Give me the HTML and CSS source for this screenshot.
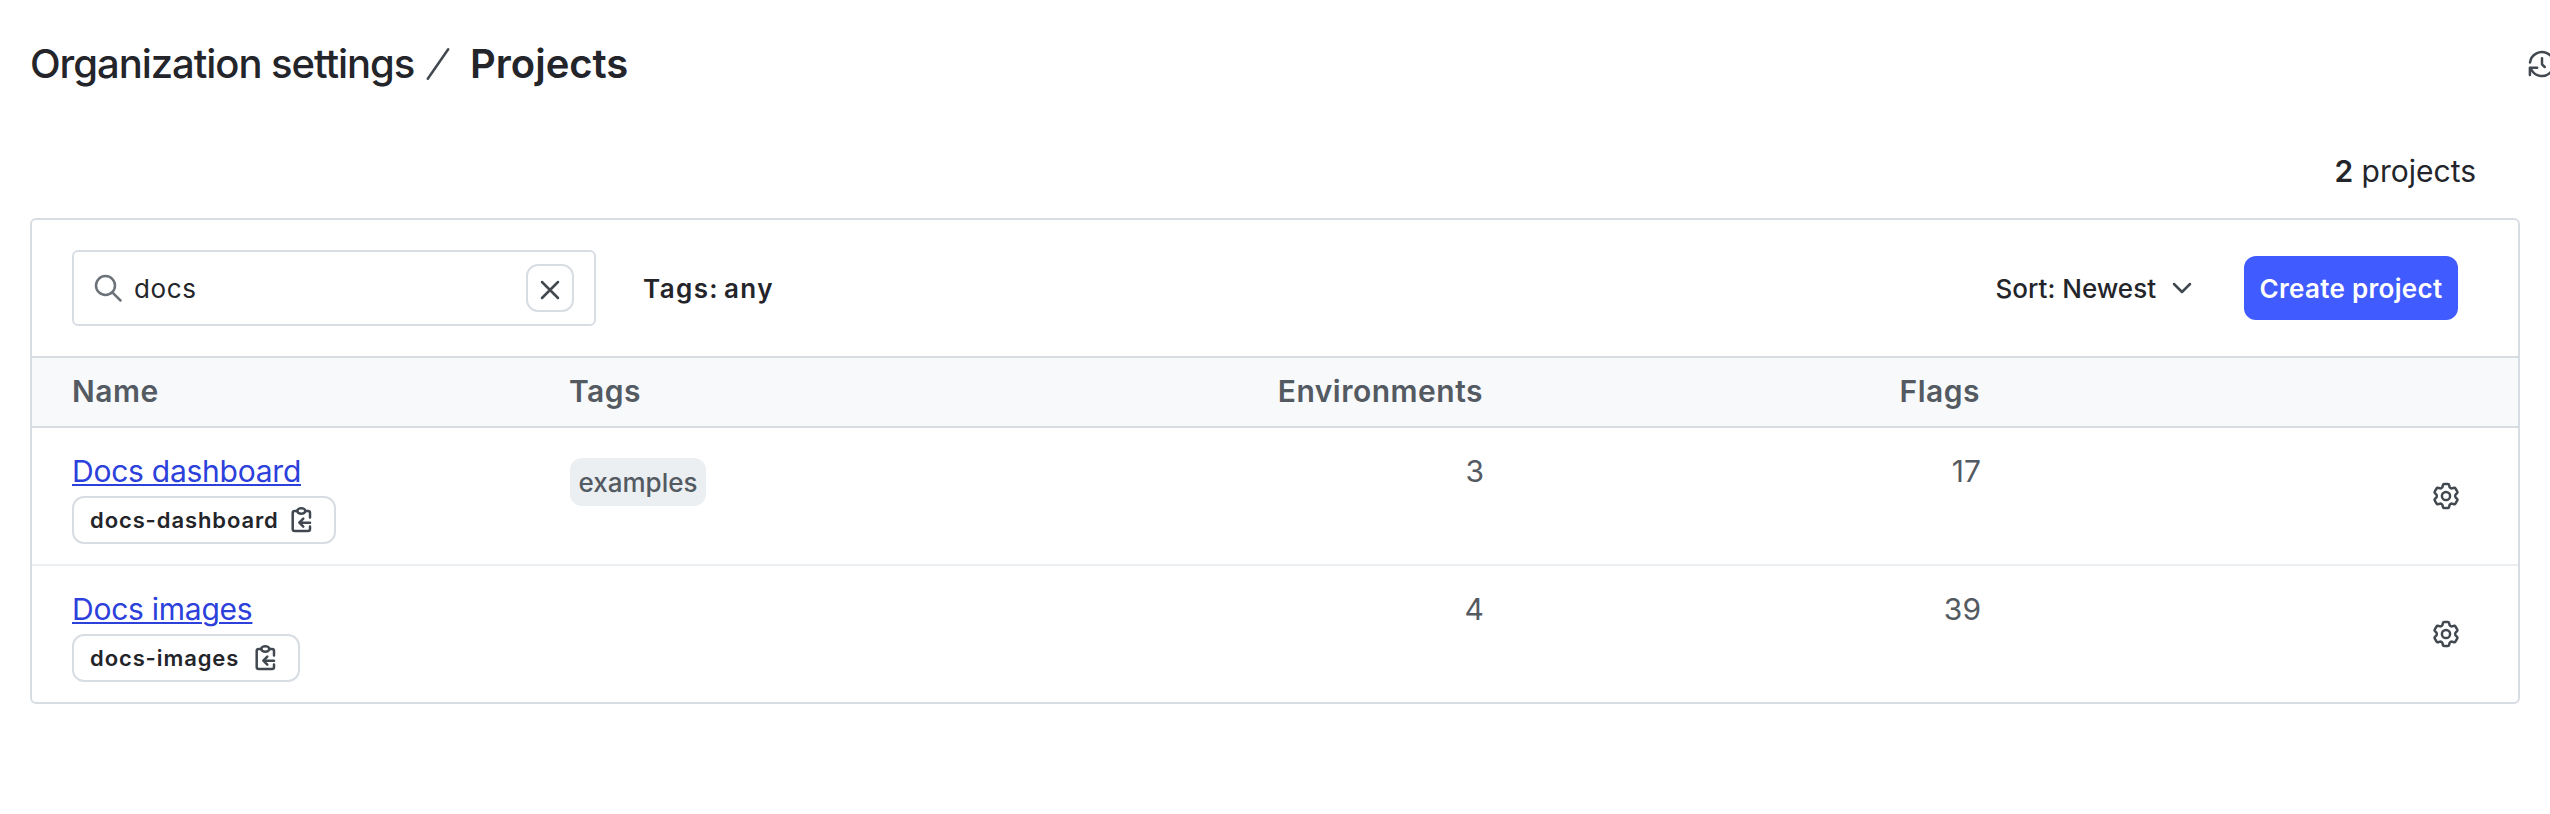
FILE: index.html
```html
<!DOCTYPE html>
<html lang="en">
<head>
    <meta charset="UTF-8">
    <meta name="viewport" content="width=device-width, initial-scale=1.0">
    <title>Projects</title>
    <link rel="stylesheet" href="styles.css">
</head>
<body>
    <!-- Shared icons -->
    <svg class="icon-defs" xmlns="http://www.w3.org/2000/svg">
        <symbol id="icon-gear" viewBox="-16 -16 32 32">
            <path d="M-3.6 -8.9L-3.1 -11Q-2.9 -12 -1.9 -12H1.9Q2.9 -12 3.1 -11L3.6 -8.9Q4.4 -7.6 5.9 -7.6L8 -8.2Q8.9 -8.5 9.4 -7.6L11.3 -4.3Q11.8 -3.5 11.1 -2.8L9.5 -1.3Q8.8 0 9.5 1.3L11.1 2.8Q11.8 3.5 11.3 4.3L9.4 7.6Q8.9 8.5 8 8.2L5.9 7.6Q4.4 7.6 3.6 8.9L3.1 11Q2.9 12 1.9 12H-1.9Q-2.9 12 -3.1 11L-3.6 8.9Q-4.4 7.6 -5.9 7.6L-8 8.2Q-8.9 8.5 -9.4 7.6L-11.3 4.3Q-11.8 3.5 -11.1 2.8L-9.5 1.3Q-8.8 0 -9.5 -1.3L-11.1 -2.8Q-11.8 -3.5 -11.3 -4.3L-9.4 -7.6Q-8.9 -8.5 -8 -8.2L-5.9 -7.6Q-4.4 -7.6 -3.6 -8.9Z"/>
            <circle cx="0" cy="0" r="4.1"/>
        </symbol>
        <symbol id="icon-copy" viewBox="0 0 24 28">
            <path d="M8 5H5.7Q3.7 5 3.7 7V23Q3.7 25 5.7 25H19Q21 25 21 23V20.5M16.5 5H19Q21 5 21 7V11.5"/>
            <ellipse cx="12.3" cy="5" rx="4" ry="2.7"/>
            <path d="M21 16.7H10.5M14.3 12.7L10.3 16.7L14.3 20.7"/>
        </symbol>
    </svg>

    <header class="page-header">
        <h1 class="breadcrumb">
            <span class="breadcrumb-parent">Organization settings</span>
            <svg class="breadcrumb-slash" viewBox="0 0 24 34"><path d="M22.2 2.2L1.8 31.8"/></svg>
            <span class="breadcrumb-current">Projects</span>
        </h1>
        <svg class="history-icon" viewBox="0 0 32 32">
            <path d="M4 14.5A12 12 0 1 1 5.6 22.2L4.2 20"/>
            <path d="M3.9 27V19.8H11.2M16 10.3V16.3L18.7 19"/>
        </svg>
    </header>

    <p class="project-count"><strong>2</strong> projects</p>

    <main class="card">
        <div class="toolbar">
            <div class="search">
                <svg class="search-icon" viewBox="0 0 28 28"><circle cx="11.5" cy="11.5" r="9.5"/><path d="M18.3 18.3L26.5 26.5"/></svg>
                <span class="search-text">docs</span>
                <button class="clear-button" aria-label="Clear">
                    <svg class="clear-icon" viewBox="0 0 20 20"><path d="M2 2L18 18M18 2L2 18"/></svg>
                </button>
            </div>
            <button class="filter-button">Tags: any</button>
            <button class="sort-button">
                Sort: Newest
                <svg class="chevron-icon" viewBox="0 0 20 12"><path d="M2 2L10 10L18 2"/></svg>
            </button>
            <button class="create-button">Create project</button>
        </div>

        <div class="row row-head">
            <div>Name</div>
            <div>Tags</div>
            <div class="number">Environments</div>
            <div class="number">Flags</div>
            <div></div>
        </div>
        <div class="row">
            <div class="name-cell">
                <a class="project-link" href="#">Docs dashboard</a>
                <span class="key-badge key-dashboard">docs-dashboard <svg class="copy-icon"><use href="#icon-copy"/></svg></span>
            </div>
            <div class="tag-cell"><span class="tag">examples</span></div>
            <div class="number">3</div>
            <div class="number">17</div>
            <div class="action"><svg class="gear-icon"><use href="#icon-gear"/></svg></div>
        </div>
        <div class="row">
            <div class="name-cell">
                <a class="project-link" href="#">Docs images</a>
                <span class="key-badge key-images">docs-images <svg class="copy-icon"><use href="#icon-copy"/></svg></span>
            </div>
            <div></div>
            <div class="number">4</div>
            <div class="number">39</div>
            <div class="action"><svg class="gear-icon"><use href="#icon-gear"/></svg></div>
        </div>
    </main>
</body>
</html>
```

FILE: styles.css
```css
* {
    box-sizing: border-box;
}

body {
    margin: 0;
    padding: 40px 30px 0;
    overflow: hidden;
    background-color: #fff;
    color: #23252a;
    font-family: Inter, "Liberation Sans", sans-serif;
    font-size: 30px;
}

button {
    padding: 0;
    border: none;
    background: none;
    color: inherit;
    font-family: inherit;
    font-size: 26px;
    cursor: pointer;
}

svg {
    flex: none;
    fill: none;
    stroke: #414850;
    stroke-width: 2.5;
    stroke-linecap: round;
    stroke-linejoin: round;
}

.icon-defs {
    display: none;
}

/* Page heading */
.page-header {
    display: flex;
    justify-content: space-between;
    align-items: center;
    height: 48px;
    margin-right: -38px;
}

.breadcrumb {
    display: flex;
    align-items: center;
    margin: 0;
    font-size: 40px;
    line-height: 48px;
    font-weight: 500;
    white-space: nowrap;
}

.breadcrumb-parent {
    width: 396px;
    letter-spacing: -1.05px;
}

.breadcrumb-slash {
    width: 24px;
    height: 34px;
}

.breadcrumb-current {
    margin-left: 20px;
    font-weight: 600;
}

.history-icon {
    width: 32px;
    height: 32px;
}

.project-count {
    margin: 65px 44px 0 0;
    height: 65px;
    line-height: 36px;
    text-align: right;
}

.project-count strong {
    font-weight: 600;
}

/* Projects table */
.card {
    border: 2px solid #d8dde3;
    border-radius: 6px;
}

.toolbar {
    display: flex;
    align-items: center;
    height: 136px;
    padding: 0 60px 0 40px;
}

.search {
    display: flex;
    align-items: center;
    width: 524px;
    height: 76px;
    padding: 0 20px;
    border: 2px solid #d8dde3;
    border-radius: 6px;
    font-size: 26px;
}

.search-icon {
    width: 28px;
    height: 28px;
    stroke: #6c727a;
}

.search-text {
    margin-left: 12px;
    letter-spacing: 0.6px;
}

.clear-button {
    display: flex;
    align-items: center;
    justify-content: center;
    width: 48px;
    height: 48px;
    margin-left: auto;
    padding-top: 4px;
    border: 2px solid #d8dde3;
    border-radius: 12px;
}

.clear-icon {
    width: 20px;
    height: 20px;
}

.filter-button {
    margin-left: 47px;
    font-weight: 600;
    letter-spacing: 1.4px;
    word-spacing: -3px;
}

.sort-button {
    display: flex;
    align-items: center;
    gap: 16px;
    margin-left: auto;
    font-weight: 500;
}

.chevron-icon {
    width: 20px;
    height: 12px;
}

.create-button {
    width: 214px;
    height: 64px;
    margin-left: 52px;
    border-radius: 12px;
    background-color: #405bff;
    color: #fff;
    font-weight: 600;
    letter-spacing: 0.3px;
}

.row {
    display: grid;
    grid-template-columns: 498px 498px 416px 497px 1fr;
    height: 138px;
    padding: 25px 56px 0 40px;
    border-bottom: 2px solid #ebeff2;
    color: #545a62;
    line-height: 36px;
}

.row:last-child {
    height: 136px;
    border-bottom: none;
}

.row-head {
    grid-template-columns: 497px 498px 416px 497px 1fr;
    height: 72px;
    padding-top: 15px;
    border-top: 2px solid #d8dde3;
    border-bottom-color: #d8dde3;
    background-color: #f7f9fb;
    font-weight: 600;
    letter-spacing: 0.5px;
}

.number {
    text-align: right;
}

.name-cell {
    display: flex;
    flex-direction: column;
    align-items: flex-start;
    gap: 7px;
}

.project-link {
    color: #2c40db;
    letter-spacing: -0.25px;
    text-decoration-thickness: 2px;
    text-underline-offset: 2px;
}

.key-badge {
    display: flex;
    align-items: center;
    justify-content: space-between;
    height: 48px;
    padding: 0 21px 0 16px;
    border: 2px solid #d8dde3;
    border-radius: 12px;
    color: #23252a;
    font-size: 22px;
    font-weight: 600;
    letter-spacing: 0.9px;
}

.key-dashboard {
    width: 264px;
}

.key-images {
    width: 228px;
}

.copy-icon {
    width: 24px;
    height: 28px;
}

.tag-cell {
    padding-top: 5px;
}

.tag {
    display: inline-block;
    width: 136px;
    height: 48px;
    border-radius: 12px;
    background-color: #ebeff2;
    font-size: 26px;
    font-weight: 500;
    line-height: 49px;
    text-align: center;
}

.action {
    display: flex;
    justify-content: flex-end;
    padding-top: 27px;
}

.gear-icon {
    width: 32px;
    height: 32px;
}
```
